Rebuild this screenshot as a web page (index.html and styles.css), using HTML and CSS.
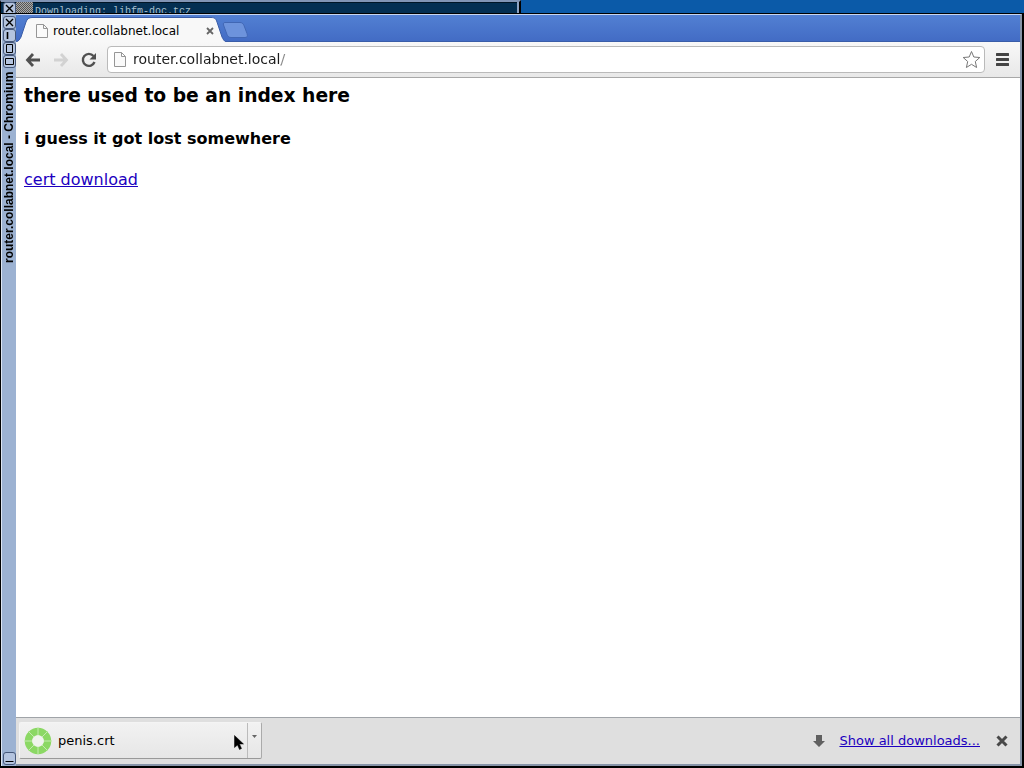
FILE: index.html
```html
<!DOCTYPE html>
<html lang="en">
<head>
    <meta charset="UTF-8">
    <meta name="viewport" content="width=device-width, initial-scale=1.0">
    <title>router.collabnet.local</title>
    <link rel="stylesheet" href="styles.css">
</head>
<body>
    <div class="terminal">
        <button class="wm-button" aria-label="Close terminal">
            <svg width="11" height="11" viewBox="0 0 11 11"><path d="M2 2l7 7M9 2l-7 7" stroke="#000" stroke-width="1.4"/></svg>
        </button>
        <span class="terminal-scroll"></span>
        <span class="terminal-text">Downloading: libfm-doc.tcz</span>
    </div>
    <div class="window">
        <div class="titlebar">
            <button class="wm-button" aria-label="Close">
                <svg width="11" height="11" viewBox="0 0 11 11"><path d="M2 2l7 7M9 2l-7 7" stroke="#000" stroke-width="1.4"/></svg>
            </button>
            <button class="wm-button" aria-label="Shade">
                <svg width="11" height="11" viewBox="0 0 11 11"><path d="M3.5 2v7" stroke="#000" stroke-width="1.6"/></svg>
            </button>
            <button class="wm-button" aria-label="Maximize vertically">
                <svg width="11" height="11" viewBox="0 0 11 11"><path d="M2.5 1.5h6v8h-6z" fill="none" stroke="#000"/></svg>
            </button>
            <button class="wm-button" aria-label="Maximize">
                <svg width="11" height="11" viewBox="0 0 11 11"><path d="M1.5 2.5h8v6h-8z" fill="none" stroke="#000"/></svg>
            </button>
            <span class="window-title">router.collabnet.local - Chromium</span>
            <button class="wm-button" aria-label="Minimize">
                <svg width="11" height="11" viewBox="0 0 11 11"><path d="M1.5 8.5h8" stroke="#000"/></svg>
            </button>
        </div>
        <div class="browser">
            <div class="tabs">
                <svg class="tab-shape" width="210" height="26" viewBox="0 0 210 26">
                    <path d="M0 26C3 25 4 23 5 21L10 6C11 3 13 1.5 16 1.500H195C199 1.500 200 3 201 6L206 21C207 23 208 25 210 26Z" fill="#f8f8f8"/>
                    <path d="M0 26C3 25 4 23 5 21L10 6C11 3 13 1.500 16 1.500H195C199 1.500 200 3 201 6L206 21C207 23 208 25 210 26" fill="none" stroke="#3a5da8"/>
                </svg>
                <div class="tab">
                    <svg width="12" height="14" viewBox="0 0 12 14"><path d="M.5.5h7l4 4v9H.5zM7.500.5v4h4" fill="#fafafa" stroke="#969696"/></svg>
                    <span class="tab-title">router.collabnet.local</span>
                    <button class="tab-close" aria-label="Close tab">
                        <svg width="8" height="8" viewBox="0 0 8 8"><path d="M1 1l6 6M7 1l-6 6" stroke="#666" stroke-width="1.8"/></svg>
                    </button>
                </div>
                <button class="new-tab" aria-label="New tab">
                    <svg width="26" height="16" viewBox="0 0 26 16"><path d="M3 .5h15c2 0 3 1 4 3l3 8c1 3 0 4-2 4H9c-2 0-3-1-4-3L1.500 3C1 1.500 1.500.5 3 .5z" fill="#6d93dc" stroke="#4167b4"/></svg>
                </button>
            </div>
            <div class="toolbar">
                <button class="tool" aria-label="Back">
                    <svg width="16" height="14" viewBox="0 0 16 14"><path d="M8 1L2.500 7L8 13M3 7h12" fill="none" stroke="#505050" stroke-width="2.800"/></svg>
                </button>
                <button class="tool" aria-label="Forward" disabled>
                    <svg width="16" height="14" viewBox="0 0 16 14"><path d="M8 1l5.500 6L8 13M13 7H1" fill="none" stroke="#d2d2d2" stroke-width="2.800"/></svg>
                </button>
                <button class="tool" aria-label="Reload">
                    <svg width="16" height="16" viewBox="0 0 16 16"><path d="M12.500 4A6 6 0 1 0 13.500 10" fill="none" stroke="#505050" stroke-width="2.400"/><path d="M15 1v6.500H8.500z" fill="#505050"/></svg>
                </button>
                <div class="address">
                    <svg width="12" height="15" viewBox="0 0 12 15"><path d="M.5.5h7l4 4v10H.5zM7.500.5v4h4" fill="#fafafa" stroke="#969696"/></svg>
                    <input class="address-input" type="text" value="router.collabnet.local/" aria-label="Address">
                    <button class="star" aria-label="Bookmark this page">
                        <svg width="19" height="19" viewBox="0 0 19 19"><path d="M9.500 1.500l2.300 5.500 6 .5-4.500 4 1.300 6-5.100-3.200-5.100 3.200 1.300-6-4.500-4 6-.5z" fill="#fff" stroke="#777" stroke-linejoin="round"/></svg>
                    </button>
                </div>
                <button class="menu" aria-label="Menu">
                    <svg width="13" height="13" viewBox="0 0 13 13"><path d="M1 1.500h11M1 6.500h11M1 11.500h11" stroke="#444" stroke-width="3" stroke-linecap="round"/></svg>
                </button>
            </div>
            <main class="page">
                <h3>there used to be an index here</h3>
                <h4>i guess it got lost somewhere</h4>
                <a href="#">cert download</a>
            </main>
            <footer class="downloads">
                <div class="download">
                    <button class="download-file">
                        <svg width="28" height="28" viewBox="0 0 28 28">
                            <circle cx="14" cy="14" r="9.500" fill="none" stroke="#8bd864" stroke-width="7.500"/>
                            <path d="M14 0v28M0 14h28M4 4l20 20M24 4L4 24" stroke="#c5ebb0"/>
                            <circle cx="14" cy="14" r="5.800" fill="#f0f3ee"/>
                        </svg>
                        <span>penis.crt</span>
                    </button>
                    <button class="download-menu" aria-label="Download options">
                        <svg width="5" height="3" viewBox="0 0 5 3"><path d="M0 0h5L2.500 3z" fill="#666"/></svg>
                    </button>
                    <svg class="pointer" width="10" height="16" viewBox="0 0 10 16"><path d="M.5.5v12l3-2.500 2 4.500 2-1-2-4.500h4z" fill="#000" stroke="#000" stroke-width=".5"/></svg>
                </div>
                <svg class="down-arrow" width="12" height="12" viewBox="0 0 12 12"><path d="M3 0h6v6h3l-6 6-6-6h3z" fill="#606060"/></svg>
                <a href="#">Show all downloads...</a>
                <button class="shelf-close" aria-label="Close downloads bar">
                    <svg width="12" height="12" viewBox="0 0 12 12"><path d="M1.500 1.500l9 9M10.500 1.500l-9 9" stroke="#484848" stroke-width="3"/></svg>
                </button>
            </footer>
        </div>
    </div>
</body>
</html>
```
FILE: styles.css
```css
* {
    box-sizing: border-box;
}
body {
    margin: 0;
    height: 100vh;
    display: flex;
    flex-direction: column;
    overflow: hidden;
    background: #0b5aa8;
    font-family: "DejaVu Sans", sans-serif;
    color: #000;
}
button {
    padding: 0;
    border: 0;
    background: none;
    font: inherit;
    color: inherit;
}
svg {
    display: block;
    flex: none;
}
a {
    color: #1c00c0;
}

/* window behind the browser */
.terminal {
    display: flex;
    flex: none;
    width: 521px;
    height: 13px;
    padding-left: 2px;
    overflow: hidden;
    background: #042f52;
    border-top: 2px solid #8295b5;
    border-right: 2px solid #000;
    border-left: 1px solid #000;
    box-shadow: inset -2px 0 #8fa4c4, inset 0 1px #001526;
}
.terminal-scroll {
    width: 17px;
    background: repeating-conic-gradient(#aaa 0 25%, #555 0 50%) 0 0 / 2px 2px;
}
.terminal-text {
    padding: 4px 0 0 2px;
    font: 10px/12px "Liberation Mono", monospace;
    color: #a8c0d0;
    white-space: nowrap;
}

.window {
    flex: 1;
    min-height: 0;
    display: flex;
    border: solid #000;
    border-width: 1px 2px 2px 1px;
}
.titlebar {
    display: flex;
    flex-direction: column;
    align-items: center;
    flex: none;
    width: 15px;
    padding: 2px 0 1px;
    background: #9cb2d2;
    border-left: 1px solid #dce5f2;
}
.wm-button {
    flex: none;
    width: 13px;
    height: 13px;
    border: 1px solid #46587a;
    border-radius: 3px;
    background: #b4c4df;
}
.window-title {
    flex: 1;
    /* rotated, so this is the gap under the buttons */
    padding-bottom: 4px;
    writing-mode: vertical-rl;
    transform: rotate(180deg);
    text-align: right;
    font: bold 12px/13px "Liberation Sans", sans-serif;
    white-space: nowrap;
}
.browser {
    flex: 1;
    min-width: 0;
    display: flex;
    flex-direction: column;
    border: solid #8794a8;
    border-width: 1px 2px 2px 0;
    border-top-color: #c8d6ef;
}

.tabs {
    position: relative;
    display: flex;
    flex: none;
    height: 27px;
    padding-top: 1px;
    background: linear-gradient(#5280d3, #426bc4);
    box-shadow: inset 0 -1px #3a5da8;
}
.tab-shape {
    position: absolute;
    top: 1px;
    left: 0;
}
.tab {
    position: relative;
    display: flex;
    align-items: center;
    width: 206px;
    padding: 4px 6px 0 20px;
    font-size: 12px;
}
.tab-title {
    flex: 1;
    padding-left: 5px;
}
.tab-close {
    padding: 2px;
}
.new-tab {
    display: flex;
    align-items: flex-start;
    padding-top: 6px;
}

.toolbar {
    display: flex;
    align-items: center;
    flex: none;
    height: 36px;
    padding: 0 9px;
    background: linear-gradient(#f8f8f8, #e8e8e8);
    border-bottom: 1px solid #a8a8a8;
}
.tool {
    width: 28px;
}
.tool:nth-child(3) {
    width: 26px;
}
.address {
    flex: 1;
    display: flex;
    align-items: center;
    height: 27px;
    margin-right: 9px;
    padding: 0 3px 0 6px;
    background: #fff;
    border: 1px solid #bababa;
    border-radius: 4px;
}
.address-input {
    flex: 1;
    min-width: 0;
    padding: 0 0 1px 7px;
    border: 0;
    outline: 0;
    font: 14px/20px "DejaVu Sans", sans-serif;
    /* the path after the host is greyed */
    color: transparent;
    background: linear-gradient(90deg, #1a1a1a 155px, #888 155px);
    -webkit-background-clip: text;
    background-clip: text;
}
.menu {
    padding: 2px;
}

.page {
    flex: 1;
    min-height: 0;
    overflow: auto;
    padding: 7px 8px;
    background: #fff;
    font-size: 16px;
}
.page h3 {
    margin: 0 0 22px;
    line-height: 22px;
}
.page h4 {
    margin: 0 0 22px;
    line-height: 19px;
}

.downloads {
    display: flex;
    align-items: center;
    flex: none;
    height: 47px;
    padding: 0 12px 1px 3px;
    background: #dfdfdf;
    border-top: 1px solid #a0a4a8;
    font-size: 13px;
}
.download {
    position: relative;
    display: flex;
    width: 243px;
    height: 37px;
    background: linear-gradient(#f2f2f2, #e6e6e6);
    border: 1px solid #f4f4f4;
    border-right-color: #aaa;
    border-bottom-color: #999;
    border-radius: 2px;
}
.download-file {
    flex: 1;
    display: flex;
    align-items: center;
    gap: 6px;
    padding-left: 4px;
}
.download-menu {
    display: flex;
    justify-content: center;
    width: 14px;
    padding-top: 12px;
    border-left: 1px solid #bbb;
}
.pointer {
    position: absolute;
    top: 12px;
    right: 17px;
}
.down-arrow {
    margin: 0 14px 0 auto;
}
.shelf-close {
    margin-left: 16px;
}
```
